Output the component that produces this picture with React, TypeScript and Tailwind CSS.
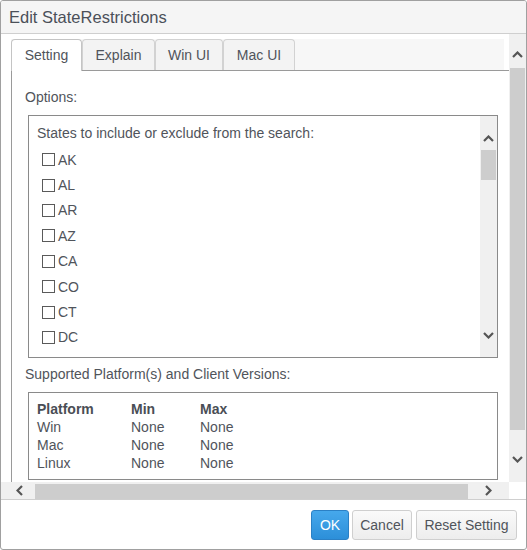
import React from "react";

const Up = () => (
  <svg width="11" height="7" viewBox="0 0 11 7" className="block">
    <polyline points="1,6 5.5,1.5 10,6" fill="none" stroke="#555" strokeWidth="2.2" />
  </svg>
);
const Down = () => (
  <svg width="11" height="7" viewBox="0 0 11 7" className="block">
    <polyline points="1,1 5.5,5.5 10,1" fill="none" stroke="#555" strokeWidth="2.2" />
  </svg>
);
const Left = () => (
  <svg width="7" height="11" viewBox="0 0 7 11" className="block">
    <polyline points="6,1 1.5,5.5 6,10" fill="none" stroke="#555" strokeWidth="2.2" />
  </svg>
);
const Right = () => (
  <svg width="7" height="11" viewBox="0 0 7 11" className="block">
    <polyline points="1,1 5.5,5.5 1,10" fill="none" stroke="#555" strokeWidth="2.2" />
  </svg>
);

const states = ["AK", "AL", "AR", "AZ", "CA", "CO", "CT", "DC"];

export default function App() {
  return (
    <div className="w-[527px] h-[550px] bg-white border border-[#a0a0a0] rounded-[3px] flex flex-col overflow-hidden font-['Liberation_Sans',Arial,sans-serif] text-[#50545b]">
      {/* Title bar */}
      <div className="h-[33px] shrink-0 bg-[#f5f5f5] border-b border-[#cfcfcf] flex items-center pl-[8px] text-[16.5px] text-[#4b5059]">
        Edit StateRestrictions
      </div>

      {/* Scroll area */}
      <div className="h-[465px] shrink-0 flex flex-col">
        <div className="h-[448px] flex">
          <div className="w-[508px] h-[448px] overflow-hidden pt-[5px] pl-[10px]">
            {/* Tabs */}
            <div className="w-[498px] border-b border-[#9a9a9a] h-[32px]">
              <div className="w-[493px] h-[31px] bg-[#f7f7f7] flex text-[14px]">
                <div className="w-[71px] h-[32px] bg-white border border-b-0 border-[#c4c4c4] rounded-t-[4px] flex items-center justify-center pb-[1px]">
                  Setting
                </div>
                <div className="w-[73px] h-[31px] bg-[#f3f3f3] border border-b-0 border-[#d2d2d2] rounded-t-[4px] flex items-center justify-center">
                  Explain
                </div>
                <div className="w-[68px] h-[31px] bg-[#f3f3f3] border border-b-0 border-[#d2d2d2] rounded-t-[4px] flex items-center justify-center">
                  Win UI
                </div>
                <div className="w-[72px] h-[31px] bg-[#f3f3f3] border border-b-0 border-[#d2d2d2] rounded-t-[4px] flex items-center justify-center">
                  Mac UI
                </div>
              </div>
            </div>

            {/* Panel */}
            <div className="border-l border-[#9a9a9a] pl-[13px] pt-[18px] h-[420px] text-[14px]">
              <div className="leading-[16px]">Options:</div>
              <div className="ml-[3px] mt-[10px] w-[470px] h-[243px] border border-[#8a8a8a] flex">
                <div className="flex-1 overflow-hidden pl-[8px] pt-[9px]">
                  <div className="leading-[16px]">States to include or exclude from the search:</div>
                  <div className="pl-[5px] pt-[6px]">
                    {states.map((s) => (
                      <div key={s} className="h-[25.4px] flex items-center">
                        <span className="w-[13px] h-[13px] border border-[#5a5a5a] bg-white shrink-0"></span>
                        <span className="ml-[3px] leading-[16px]">{s}</span>
                      </div>
                    ))}
                  </div>
                </div>
                <div className="w-[17px] bg-[#f0f0f0] flex flex-col items-center">
                  <div className="pt-[19px]"><Up /></div>
                  <div className="mt-[8px] w-[15px] h-[30px] bg-[#cdcdcd]"></div>
                  <div className="flex-1"></div>
                  <div className="pb-[18px]"><Down /></div>
                </div>
              </div>

              <div className="mt-[8px] leading-[16px]">Supported Platform(s) and Client Versions:</div>
              <div className="ml-[3px] mt-[10px] w-[470px] h-[88px] border border-[#8a8a8a] pl-[8px] pt-[7px] leading-[18px]">
                <div className="grid grid-cols-[94px_69px_80px] font-bold text-[#4a4e55]">
                  <div>Platform</div>
                  <div>Min</div>
                  <div>Max</div>
                </div>
                {["Win", "Mac", "Linux"].map((p) => (
                  <div key={p} className="grid grid-cols-[94px_69px_80px]">
                    <div>{p}</div>
                    <div>None</div>
                    <div>None</div>
                  </div>
                ))}
              </div>
            </div>
          </div>

          {/* Vertical scrollbar */}
          <div className="w-[17px] h-[448px] bg-[#f0f0f0] flex flex-col">
            <div className="h-[34px] flex items-end justify-center pb-[10px]"><Up /></div>
            <div className="ml-[1px] w-[15px] h-[362px] bg-[#cdcdcd]"></div>
            <div className="flex-1 flex items-end justify-center pb-[19px]"><Down /></div>
          </div>
        </div>

        {/* Horizontal scrollbar */}
        <div className="h-[17px] flex">
          <div className="w-[508px] h-[17px] bg-[#f0f0f0] flex items-center">
            <div className="w-[34px] flex justify-center pl-[2px]"><Left /></div>
            <div className="w-[433px] h-[15px] mt-[1px] bg-[#cdcdcd]"></div>
            <div className="flex-1 flex justify-center pr-[1px]"><Right /></div>
          </div>
          <div className="w-[17px] h-[17px] bg-white"></div>
        </div>
      </div>

      {/* Footer */}
      <div className="flex-1 border-t border-[#cfcfcf] flex justify-end items-start pt-[10px] pr-[9px] gap-[3px] text-[14px]">
        <button className="w-[38px] h-[30px] rounded-[3px] border border-[#2b80c5] bg-gradient-to-b from-[#46a8ec] to-[#2c8fd9] text-white">
          OK
        </button>
        <button className="w-[60px] h-[30px] rounded-[3px] border border-[#cfcfcf] bg-gradient-to-b from-[#fafafa] to-[#ededed] text-[#50545b]">
          Cancel
        </button>
        <button className="ml-[1px] w-[101px] h-[30px] rounded-[3px] border border-[#cfcfcf] bg-gradient-to-b from-[#fafafa] to-[#ededed] text-[#50545b]">
          Reset Setting
        </button>
      </div>
    </div>
  );
}
